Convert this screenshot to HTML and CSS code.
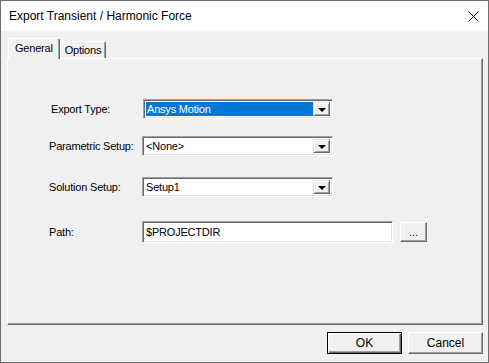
FILE: index.html
```html
<!DOCTYPE html>
<html lang="en">
  <head>
    <meta charset="UTF-8" />
    <title>Export Transient / Harmonic Force</title>
    <link rel="stylesheet" href="styles.css">
  </head>
  <body>
    <div class="window">
      <div class="titlebar">
        <span class="title">Export Transient / Harmonic Force</span>
        <svg class="close-icon" width="11" height="11" viewBox="0 0 11 11">
          <path d="M0.5 0.5 L10.5 10.5 M10.5 0.5 L0.5 10.5" stroke="#000" stroke-width="1" fill="none" />
        </svg>
      </div>

      <div class="client">
        <div class="tabs">
          <div class="tab tab-active">General</div>
          <div class="tab">Options</div>
        </div>

        <div class="panel">
          <div class="form">
            <div class="form-row row-first">
              <label class="label label-export">Export Type:</label>
              <div class="combo combo-export">
                <span class="combo-text combo-selected">Ansys Motion</span>
                <span class="combo-button"><span class="arrow"></span></span>
              </div>
            </div>

            <div class="form-row row-second">
              <label class="label">Parametric Setup:</label>
              <div class="combo">
                <span class="combo-text">&lt;None&gt;</span>
                <span class="combo-button"><span class="arrow"></span></span>
              </div>
            </div>

            <div class="form-row row-third">
              <label class="label">Solution Setup:</label>
              <div class="combo">
                <span class="combo-text">Setup1</span>
                <span class="combo-button"><span class="arrow"></span></span>
              </div>
            </div>

            <div class="form-row row-fourth">
              <label class="label">Path:</label>
              <div class="edit">$PROJECTDIR</div>
              <button class="button browse-button">...</button>
            </div>
          </div>
        </div>

        <div class="footer">
          <button class="button dialog-button default-button">OK</button>
          <button class="button dialog-button">Cancel</button>
        </div>
      </div>
    </div>
  </body>
</html>
```

FILE: styles.css
```css
* {
  box-sizing: border-box;
}

body {
  margin: 0;
  font-family: "Liberation Sans", Arial, sans-serif;
  font-size: 11px;
  color: #000;
  background: #3a4a4a;
}

.window {
  width: 489px;
  height: 363px;
  border: 1px solid #6e6e6e;
  display: flex;
  flex-direction: column;
  background: #f0f0f0;
}

.titlebar {
  height: 30px;
  background: #fff;
  display: flex;
  align-items: center;
  justify-content: space-between;
  padding-left: 8px;
  padding-right: 9px;
}

.title {
  font-size: 12px;
  padding-bottom: 1px;
}

.close-icon {
  display: block;
}

.client {
  flex: 1;
  display: flex;
  flex-direction: column;
  padding: 7px 5px 0 6px;
}

/* tabs */
.tabs {
  display: flex;
  align-items: flex-end;
  height: 20px;
  padding-left: 1px;
  position: relative;
  z-index: 1;
}

.tab {
  height: 17px;
  padding: 0 4px 0 4px;
  line-height: 17px;
  border-top: 1px solid #fff;
  border-left: 1px solid #fff;
  border-right: 1px solid #696969;
  border-radius: 2px 2px 0 0;
  box-shadow: inset -1px 0 #a0a0a0;
  font-size: 11px;
  letter-spacing: -0.2px;
}

.tab-active {
  height: 21px;
  padding: 0 6px 0 6px;
  line-height: 18px;
  background: #f0f0f0;
  margin-bottom: -1px;
}

.panel {
  height: 267px;
  border-top: 1px solid #fff;
  border-left: 1px solid #fff;
  border-right: 1px solid #696969;
  border-bottom: 1px solid #696969;
  box-shadow: inset -1px -1px #a0a0a0;
  padding: 40px 0 0 41px;
}

/* form */
.form {
  display: flex;
  flex-direction: column;
}

.form-row {
  display: flex;
  align-items: center;
}

.row-second {
  margin-top: 17px;
}

.row-third {
  margin-top: 21px;
}

.row-fourth {
  margin-top: 24px;
}

.label {
  width: 93px;
  letter-spacing: -0.2px;
}

.label-export {
  padding-left: 2px;
}

.combo,
.edit {
  height: 20px;
  border: 1px solid;
  border-color: #a0a0a0 #fff #fff #a0a0a0;
  box-shadow: inset 1px 1px #696969, inset -1px -1px #e3e3e3;
  background: #fff;
  display: flex;
  align-items: stretch;
  padding: 2px;
}

.combo {
  width: 191px;
}

.combo-export {
  margin-left: 1px;
  width: 190px;
}

.combo-text {
  flex: 1;
  display: flex;
  align-items: center;
  padding-left: 1px;
  letter-spacing: -0.2px;
}

.combo-selected {
  background: #0078d7;
  color: #fff;
}

.combo-button {
  width: 17px;
  border: 1px solid;
  border-color: #e3e3e3 #696969 #696969 #e3e3e3;
  box-shadow: inset 1px 1px #fff, inset -1px -1px #a0a0a0;
  background: #f0f0f0;
  display: flex;
  align-items: center;
  justify-content: center;
}

.arrow {
  width: 0;
  height: 0;
  border-left: 4px solid transparent;
  border-right: 4px solid transparent;
  border-top: 4px solid #000;
  margin-top: 1px;
}

.edit {
  width: 251px;
  height: 22px;
  padding: 0 3px;
  align-items: center;
  letter-spacing: -0.2px;
}

/* buttons */
.button {
  font-family: inherit;
  font-size: 11px;
  background: #f0f0f0;
  border: 1px solid;
  border-color: #fff #696969 #696969 #fff;
  box-shadow: inset -1px -1px #a0a0a0;
  padding: 0;
  color: #000;
}

.browse-button {
  width: 27px;
  height: 20px;
  margin-left: 7px;
  line-height: 12px;
}

.footer {
  display: flex;
  justify-content: flex-end;
  gap: 6px;
  padding-top: 7px;
}

.dialog-button {
  width: 75px;
  height: 22px;
  font-size: 12px;
}

.default-button {
  border: 1px solid #000;
  box-shadow: inset 1px 1px #fff, inset -1px -1px #696969, inset -2px -2px #a0a0a0;
}
```
